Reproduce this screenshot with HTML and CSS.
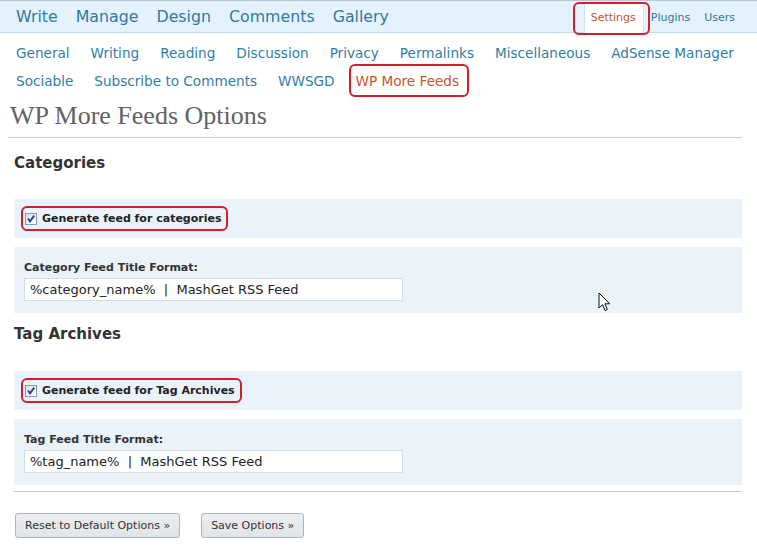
FILE: index.html
```html
<!DOCTYPE html>
<html>
<head>
<meta charset="utf-8">
<title>WP More Feeds Options</title>
<link rel="stylesheet" href="styles.css">
</head>
<body>
<header class="topbar">
  <nav class="mainnav">
    <a href="#">Write</a>
    <a href="#">Manage</a>
    <a href="#">Design</a>
    <a href="#">Comments</a>
    <a href="#">Gallery</a>
  </nav>
  <nav class="usernav">
    <a href="#" class="current marked">Settings</a>
    <a href="#" class="plugins">Plugins</a>
    <a href="#" class="users">Users</a>
  </nav>
</header>

<nav class="subnav">
  <div class="subrow">
    <a href="#">General</a>
    <a href="#">Writing</a>
    <a href="#">Reading</a>
    <a href="#">Discussion</a>
    <a href="#">Privacy</a>
    <a href="#">Permalinks</a>
    <a href="#">Miscellaneous</a>
    <a href="#">AdSense Manager</a>
  </div>
  <div class="subrow">
    <a href="#">Sociable</a>
    <a href="#">Subscribe to Comments</a>
    <a href="#">WWSGD</a>
    <a href="#" class="current marked-sub">WP More Feeds</a>
  </div>
</nav>

<main class="wrap">
  <h2 class="title">WP More Feeds Options</h2>
  <div class="content">
    <h3 class="section first">Categories</h3>
    <div class="box check-box">
      <label class="checklabel">
        <span class="cb"><svg width="10" height="10" viewBox="0 0 10 10"><path d="M2 4.6 L4 7.4 L8.2 1.6" fill="none" stroke="#2b3d94" stroke-width="1.8"/></svg></span>
        Generate feed for categories
      </label>
    </div>
    <div class="box field-box">
      <div class="fieldlabel">Category Feed Title Format:</div>
      <input class="textfield" type="text" value="%category_name%  |  MashGet RSS Feed">
    </div>

    <h3 class="section">Tag Archives</h3>
    <div class="box check-box">
      <label class="checklabel">
        <span class="cb"><svg width="10" height="10" viewBox="0 0 10 10"><path d="M2 4.6 L4 7.4 L8.2 1.6" fill="none" stroke="#2b3d94" stroke-width="1.8"/></svg></span>
        Generate feed for Tag Archives
      </label>
    </div>
    <div class="box field-box last">
      <div class="fieldlabel">Tag Feed Title Format:</div>
      <input class="textfield" type="text" value="%tag_name%  |  MashGet RSS Feed">
    </div>

    <hr class="sep">

    <div class="buttons">
      <button class="btn">Reset to Default Options »</button>
      <button class="btn">Save Options »</button>
    </div>
  </div>
</main>

<svg class="cursor" width="14" height="21" viewBox="0 0 14 21">
  <path d="M1 1 L1 16 L4.5 12.6 L7 18.5 L9.3 17.5 L6.9 11.8 L11.8 11.8 Z" fill="#fff" stroke="#111" stroke-width="1" stroke-linejoin="round"/>
</svg>
</body>
</html>
```

FILE: styles.css
```css
* { box-sizing: border-box; }

html, body {
  margin: 0;
  padding: 0;
  background: #fff;
  font-family: "DejaVu Sans", Verdana, sans-serif;
  color: #333;
}

a { text-decoration: none; }

.topbar {
  display: flex;
  justify-content: space-between;
  height: 33px;
  border-top: 1px solid #bfc6cc;
  border-bottom: 1px solid #c6d9e9;
  background: #e4f2fd;
}

.mainnav {
  display: flex;
  align-items: center;
  gap: 18px;
  padding-left: 16px;
}

.mainnav a {
  font-size: 15.8px;
  line-height: 31px;
  color: #2f7aa0;
}

.usernav {
  display: flex;
  align-items: flex-end;
  padding-right: 22px;
}

.usernav a {
  font-size: 11px;
  line-height: 30px;
  height: 30px;
  margin-bottom: -1px;
  color: #2f7aa0;
}

.usernav a.current {
  position: relative;
  background: #fff;
  color: #c9532b;
  padding: 0 7px 0 6px;
  border-left: 1px solid #d3e2ee;
  border-right: 1px solid #d3e2ee;
}

.usernav a.plugins { margin-left: 7px; }
.usernav a.users { margin-left: 14px; }

.marked::after {
  content: "";
  position: absolute;
  left: -12px;
  right: -7px;
  top: -1px;
  bottom: -2px;
  border: 2px solid #d11f2b;
  border-radius: 6px;
}

.subnav {
  margin-top: 6px;
  padding-left: 16px;
}

.subrow {
  display: flex;
  gap: 21px;
}

.subrow a {
  font-size: 13.6px;
  line-height: 28px;
  color: #2f7ea6;
}

.subrow a.current {
  color: #c9532b;
}

.marked-sub { position: relative; }

.marked-sub::after {
  content: "";
  position: absolute;
  left: -7px;
  right: -10px;
  top: -3px;
  bottom: -2px;
  border: 2px solid #d11f2b;
  border-radius: 6px;
}

.wrap {
  margin: 6px 15px 0 8px;
}

.title {
  margin: 0;
  padding: 0 0 6px 2px;
  font-family: "Liberation Serif", "Times New Roman", serif;
  font-weight: normal;
  font-size: 26px;
  line-height: 30px;
  color: #626262;
  border-bottom: 1px solid #cfcfcf;
}

.content {
  padding-left: 6px;
}

.section {
  margin: 11px 0 27px;
  font-size: 15px;
  line-height: 20px;
  font-weight: bold;
  color: #333;
}

.section.first { margin-top: 15px; margin-bottom: 26px; }

.box {
  background: #eaf2fa;
  margin-bottom: 9px;
}

.box.last { margin-bottom: 6px; }

.check-box {
  padding: 7px;
}

.checklabel {
  display: inline-flex;
  align-items: center;
  gap: 5px;
  height: 25px;
  padding: 0 5px 0 2px;
  border: 2px solid #d11f2b;
  border-radius: 6px;
  font-size: 11px;
  font-weight: bold;
  color: #222;
}

.cb {
  display: inline-flex;
  align-items: center;
  justify-content: center;
  width: 12px;
  height: 12px;
  border: 1px solid #7f9db9;
  background: linear-gradient(135deg, #dcdcd7, #fff);
}

.field-box {
  padding: 12px 10px;
}

.fieldlabel {
  font-size: 11px;
  line-height: 18px;
  font-weight: bold;
  color: #333;
}

.textfield {
  display: block;
  margin: 1px 0 0;
  width: 379px;
  height: 23px;
  padding: 0 5px;
  border: 1px solid #d6dde3;
  background: #fff;
  font-family: "DejaVu Sans", Verdana, sans-serif;
  font-size: 13px;
  color: #222;
}

.sep {
  margin: 0;
  border: 0;
  border-top: 1px solid #c8c8c8;
}

.buttons {
  display: flex;
  gap: 21px;
  margin: 21px 0 0 1px;
}

.btn {
  height: 25px;
  padding: 0 9px;
  border: 1px solid #a9b6c2;
  border-radius: 3px;
  background: linear-gradient(#eceef0, #e0e4e8);
  font-family: "DejaVu Sans", Verdana, sans-serif;
  font-size: 11px;
  color: #333;
}

.cursor {
  position: absolute;
  left: 598px;
  top: 292px;
}
```
